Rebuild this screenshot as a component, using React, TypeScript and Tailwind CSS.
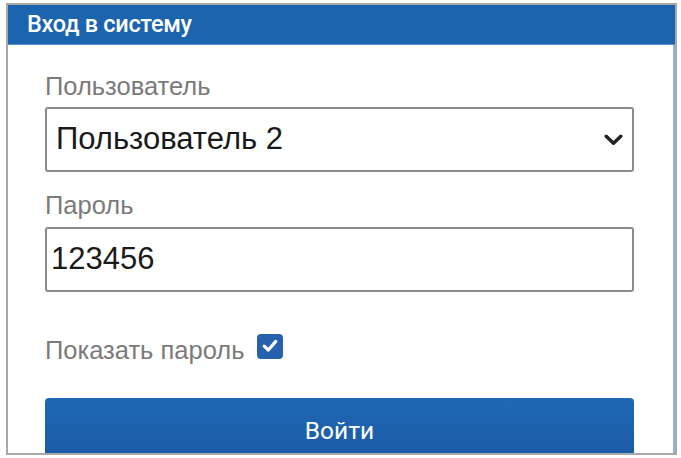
export default function App() {
  return (
    <div className="h-[458px] w-[681px] overflow-hidden bg-white pl-[6px] pt-[3px]" style={{ fontFamily: '"Liberation Sans", Arial, sans-serif' }}>
      <div className="flex h-[452px] w-[671px] flex-col overflow-hidden border-2 border-[#a8a8a8]">
        <div className="flex h-[40px] shrink-0 items-center border-b border-[#5d95d0] bg-[#1b64ae] pl-[19px] pr-[2px]">
          <span className="text-[23.5px] font-medium tracking-[-0.3px] text-white" style={{ fontFamily: 'Roboto, "Liberation Sans", sans-serif' }}>
            Вход в систему
          </span>
        </div>
        <div className="flex min-h-0 flex-1 flex-col overflow-hidden border-r-2 border-[#8ab6e4] pl-[37px] pr-[39px] pt-[27px]">
          <label className="text-[25.5px] leading-[28px] text-[#7a7a7a]">Пользователь</label>
          <div className="mt-[7px] flex h-[65px] shrink-0 items-center justify-between rounded-[3px] border-2 border-[#8a8a8a] pl-[9px] pr-[9px]">
            <span className="text-[31px] text-[#1a1a1a]">Пользователь 2</span>
            <svg width="19" height="12" viewBox="0 0 19 12" fill="none">
              <path d="M2.2 2.2 L9.5 9.3 L16.8 2.2" stroke="#222" strokeWidth="3.4" strokeLinecap="round" strokeLinejoin="round" />
            </svg>
          </div>
          <label className="mt-[19px] text-[25.5px] leading-[28px] text-[#7a7a7a]">Пароль</label>
          <div className="mt-[8px] flex h-[65px] shrink-0 items-center rounded-[3px] border-2 border-[#8a8a8a] pl-[4px]">
            <span className="text-[31px] text-[#1a1a1a]">123456</span>
          </div>
          <div className="mt-[44px] flex shrink-0 items-center gap-[13px]">
            <span className="text-[25.5px] leading-[28px] text-[#7a7a7a]">Показать пароль</span>
            <span className="-mt-[8px] flex h-[25px] w-[26px] items-center justify-center rounded-[4px] bg-[#2462b0]">
              <svg width="20" height="20" viewBox="0 0 20 20" fill="none">
                <path d="M4.2 10.2 L8.3 14 L15.8 5.4" stroke="white" strokeWidth="3.2" strokeLinecap="round" strokeLinejoin="round" />
              </svg>
            </span>
          </div>
          <button className="mt-[34px] flex h-[60px] w-full shrink-0 items-start justify-center rounded-t-[4px] bg-gradient-to-b from-[#1f68b5] to-[#1b5aa5] pt-[19px]">
            <span className="text-[24.5px] leading-[28px] text-white" style={{ fontFamily: 'Roboto, "Liberation Sans", sans-serif' }}>
              Войти
            </span>
          </button>
        </div>
      </div>
    </div>
  );
}
